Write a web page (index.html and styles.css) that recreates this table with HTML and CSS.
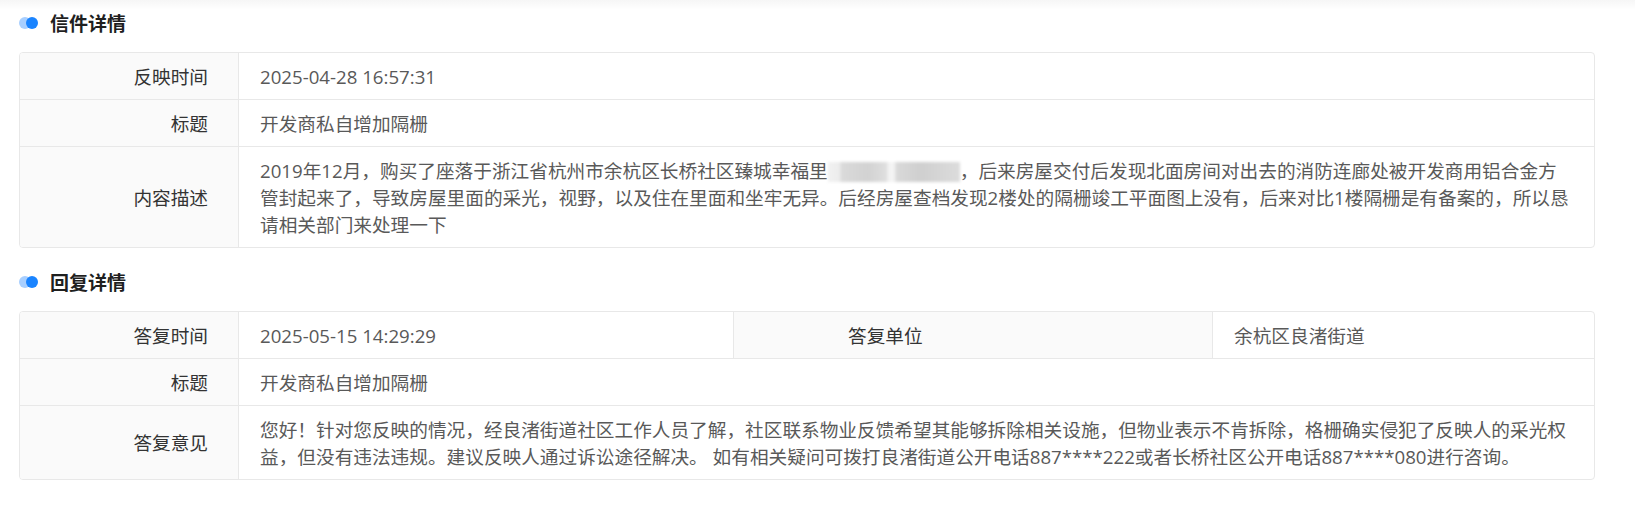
FILE: index.html
```html
<!DOCTYPE html>
<html lang="zh-CN">
<head>
    <meta charset="UTF-8">
    <meta name="viewport" content="width=device-width, initial-scale=1.0">
    <title>信件详情</title>
    <link rel="stylesheet" href="styles.css">
</head>
<body>
    <div class="page">
        <!-- 信件 -->
        <section class="section">
            <h2 class="section-title"><span class="dots"></span>信件详情</h2>
            <div class="detail">
                <div class="row">
                    <div class="label">反映时间</div>
                    <div class="value">2025-04-28 16:57:31</div>
                </div>
                <div class="row">
                    <div class="label">标题</div>
                    <div class="value">开发商私自增加隔栅</div>
                </div>
                <div class="row">
                    <div class="label">内容描述</div>
                    <div class="value">2019年12月，购买了座落于浙江省杭州市余杭区长桥社区臻城幸福里<span class="masked"></span>，后来房屋交付后发现北面房间对出去的消防连廊处被开发商用铝合金方管封起来了，导致房屋里面的采光，视野，以及住在里面和坐牢无异。后经房屋查档发现2楼处的隔栅竣工平面图上没有，后来对比1楼隔栅是有备案的，所以恳请相关部门来处理一下</div>
                </div>
            </div>
        </section>

        <!-- 回复 -->
        <section class="section">
            <h2 class="section-title"><span class="dots"></span>回复详情</h2>
            <div class="detail detail-reply">
                <div class="row">
                    <div class="label">答复时间</div>
                    <div class="value value-split">2025-05-15 14:29:29</div>
                    <div class="label label-mid">答复单位</div>
                    <div class="value">余杭区良渚街道</div>
                </div>
                <div class="row">
                    <div class="label">标题</div>
                    <div class="value wide">开发商私自增加隔栅</div>
                </div>
                <div class="row">
                    <div class="label">答复意见</div>
                    <div class="value wide">您好！针对您反映的情况，经良渚街道社区工作人员了解，社区联系物业反馈希望其能够拆除相关设施，但物业表示不肯拆除，格栅确实侵犯了反映人的采光权益，但没有违法违规。建议反映人通过诉讼途径解决。 如有相关疑问可拨打良渚街道公开电话887****222或者长桥社区公开电话887****080进行咨询。</div>
                </div>
            </div>
        </section>
    </div>
</body>
</html>
```

FILE: styles.css
```css
body {
    margin: 0;
    padding: 0;
    background: #fff linear-gradient(to bottom, rgba(0, 0, 0, 0.035), rgba(0, 0, 0, 0) 10px) no-repeat;
    font-family: 'Open Sans', 'Noto Sans CJK SC', sans-serif;
    font-size: 18.67px;
    color: #333;
}

.page {
    padding: 9px 40px 20px 19px;
}

.section {
    margin-bottom: 20px;
}

.section-title {
    display: flex;
    align-items: center;
    margin: 0 0 15px;
    height: 28px;
    font-size: 19px;
    font-weight: bold;
    color: #1f1f1f;
}

.dots {
    position: relative;
    width: 19px;
    height: 12px;
    margin-right: 12px;
}

.dots::before,
.dots::after {
    content: '';
    position: absolute;
    top: 0;
    width: 12px;
    height: 12px;
    border-radius: 50%;
}

.dots::before {
    left: 0;
    background: #a8cfff;
}

.dots::after {
    left: 7px;
    background: #1a84ff;
}

.detail {
    border: 1px solid #e8e8e8;
    border-radius: 4px;
    overflow: hidden;
}

.row {
    display: grid;
    grid-template-columns: 219px 1fr;
    border-bottom: 1px solid #e8e8e8;
}

.row:last-child {
    border-bottom: none;
}

.detail-reply .row {
    grid-template-columns: 219px 495px 479px 1fr;
}

.label {
    display: flex;
    align-items: center;
    justify-content: flex-end;
    padding: 9.5px 30px 9.5px 10px;
    background: #fafafa;
    border-right: 1px solid #e8e8e8;
    line-height: 27px;
    color: #333;
}

.label-mid {
    justify-content: flex-start;
    padding-left: 114px;
}

.value {
    display: flex;
    align-items: center;
    padding: 9.5px 22px 9.5px 21px;
    line-height: 27px;
    color: #595959;
}

.value:last-child {
    display: block;
}

.value-split {
    border-right: 1px solid #e8e8e8;
}

.wide {
    grid-column: span 3;
}

.masked {
    display: inline-block;
    width: 132px;
    height: 20px;
    vertical-align: -4px;
    background: linear-gradient(90deg, #f1f1f1 0, #ececec 9%, #dadada 10%, #d2d2d2 30%, #dedede 44%, #f4f4f4 46%, #f4f4f4 50%, #d9d9d9 52%, #cfcfcf 70%, #dcdcdc 100%);
    filter: blur(1.5px);
}
```
